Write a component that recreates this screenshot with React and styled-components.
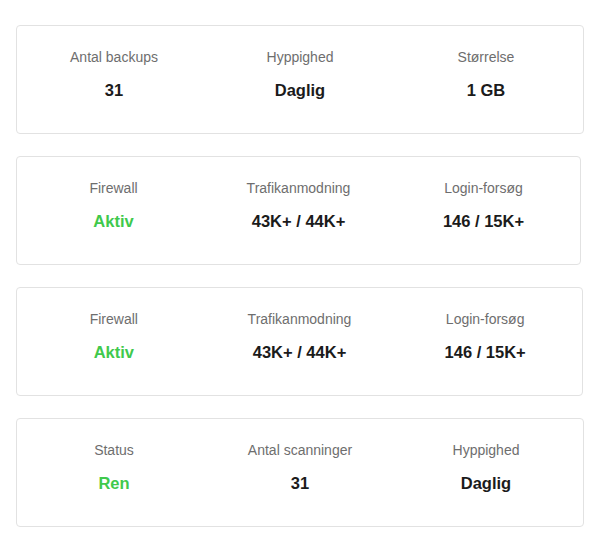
import React from 'react'
import styled, { createGlobalStyle } from 'styled-components'

const GlobalStyle = createGlobalStyle`
  body {
    margin: 0;
    background: #ffffff;
    font-family: "Liberation Sans", Arial, sans-serif;
  }
`;

const Page = styled.div`
  display: flex;
  flex-flow: column;
  gap: 22px;
  padding: 25px 16px;
`;

const Card = styled.div`
  box-sizing: border-box;
  width: ${props => props.width}px;
  display: grid;
  grid-template-columns: repeat(3, 1fr);
  column-gap: 40px;
  padding: 21px 24px 31px;
  border: 1px solid #e2e2e2;
  border-radius: 4px;
  background: #fff;
`;

const Stat = styled.div`
  display: flex;
  flex-flow: column;
  align-items: center;
  text-align: center;
`;

const Label = styled.span`
  font-size: 14px;
  line-height: 20px;
  color: #6e6e6e;
`;

const Value = styled.span`
  margin-top: 11px;
  font-size: 16.5px;
  line-height: 24px;
  font-weight: 700;
  color: ${props => (props.ok ? '#3fc94c' : '#1b1b1b')};
`;

const cards = [
  {
    width: 568,
    stats: [
      { label: 'Antal backups', value: '31' },
      { label: 'Hyppighed', value: 'Daglig' },
      { label: 'Størrelse', value: '1 GB' }
    ]
  },
  {
    width: 565,
    stats: [
      { label: 'Firewall', value: 'Aktiv', ok: true },
      { label: 'Trafikanmodning', value: '43K+ / 44K+' },
      { label: 'Login-forsøg', value: '146 / 15K+' }
    ]
  },
  {
    width: 567,
    stats: [
      { label: 'Firewall', value: 'Aktiv', ok: true },
      { label: 'Trafikanmodning', value: '43K+ / 44K+' },
      { label: 'Login-forsøg', value: '146 / 15K+' }
    ]
  },
  {
    width: 568,
    stats: [
      { label: 'Status', value: 'Ren', ok: true },
      { label: 'Antal scanninger', value: '31' },
      { label: 'Hyppighed', value: 'Daglig' }
    ]
  }
]

const App = () => (
  <>
    <GlobalStyle />
    <Page>
      {cards.map((card, i) => (
        <Card key={i} width={card.width}>
          {card.stats.map(stat => (
            <Stat key={stat.label}>
              <Label>{stat.label}</Label>
              <Value ok={stat.ok}>{stat.value}</Value>
            </Stat>
          ))}
        </Card>
      ))}
    </Page>
  </>
)

export default App
